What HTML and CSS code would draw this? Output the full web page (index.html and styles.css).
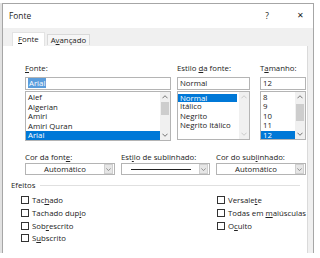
FILE: index.html
```html
<!DOCTYPE html>
<html lang="pt">
<head>
  <meta charset="UTF-8">
  <title>Fonte</title>
  <link rel="stylesheet" href="styles.css">
</head>
<body>
  <div class="window">
    <div class="titlebar">
      <span class="title">Fonte</span>
      <span class="ctrl">?</span>
      <span class="ctrl close">&#x2715;</span>
    </div>

    <div class="body">
      <div class="tabs">
        <div class="tab active"><u>F</u>onte</div>
        <div class="tab">A<u>v</u>ançado</div>
      </div>

      <div class="panel">
        <div class="pickers">
          <div class="col col-font">
            <div class="label"><u>F</u>onte:</div>
            <div class="input"><span class="sel">Arial</span></div>
            <div class="list">
              <div class="items">
                <div class="item">Alef</div>
                <div class="item">Algerian</div>
                <div class="item">Amiri</div>
                <div class="item">Amiri Quran</div>
                <div class="item on">Arial</div>
              </div>
              <div class="scroll">
                <svg class="arrow" viewBox="0 0 7 4"><path d="M0.5 3.5 L3.5 0.5 L6.5 3.5" /></svg>
                <div class="thumb thumb-font"></div>
                <svg class="arrow down" viewBox="0 0 7 4"><path d="M0.5 0.5 L3.5 3.5 L6.5 0.5" /></svg>
              </div>
            </div>
          </div>

          <div class="col col-style">
            <div class="label">Estilo <u>d</u>a fonte:</div>
            <div class="input">Normal</div>
            <div class="list short">
              <div class="items">
                <div class="item on part">Normal</div>
                <div class="item">Itálico</div>
                <div class="item">Negrito</div>
                <div class="item">Negrito Itálico</div>
              </div>
              <div class="scroll off">
                <svg class="arrow" viewBox="0 0 7 4"><path d="M0.5 3.5 L3.5 0.5 L6.5 3.5" /></svg>
                <svg class="arrow down" viewBox="0 0 7 4"><path d="M0.5 0.5 L3.5 3.5 L6.5 0.5" /></svg>
              </div>
            </div>
          </div>

          <div class="col col-size">
            <div class="label">T<u>a</u>manho:</div>
            <div class="input">12</div>
            <div class="list short">
              <div class="items">
                <div class="item">8</div>
                <div class="item">9</div>
                <div class="item">10</div>
                <div class="item">11</div>
                <div class="item on">12</div>
              </div>
              <div class="scroll">
                <svg class="arrow" viewBox="0 0 7 4"><path d="M0.5 3.5 L3.5 0.5 L6.5 3.5" /></svg>
                <div class="thumb thumb-size"></div>
                <svg class="arrow down" viewBox="0 0 7 4"><path d="M0.5 0.5 L3.5 3.5 L6.5 0.5" /></svg>
              </div>
            </div>
          </div>
        </div>

        <div class="combos">
          <div class="combo-col">
            <div class="label">Cor da font<u>e</u>:</div>
            <div class="combo">
              <span class="value">Automático</span>
              <span class="drop"><svg viewBox="0 0 7 4"><path d="M0.5 0.5 L3.5 3.5 L6.5 0.5" /></svg></span>
            </div>
          </div>
          <div class="combo-col">
            <div class="label">Est<u>i</u>lo de sublinhado:</div>
            <div class="combo">
              <span class="value"><span class="line"></span></span>
              <span class="drop"><svg viewBox="0 0 7 4"><path d="M0.5 0.5 L3.5 3.5 L6.5 0.5" /></svg></span>
            </div>
          </div>
          <div class="combo-col">
            <div class="label">Cor do sub<u>l</u>inhado:</div>
            <div class="combo">
              <span class="value">Automático</span>
              <span class="drop"><svg viewBox="0 0 7 4"><path d="M0.5 0.5 L3.5 3.5 L6.5 0.5" /></svg></span>
            </div>
          </div>
        </div>

        <div class="group">
          <div class="group-title"><span>Efeitos</span><span class="rule"></span></div>
          <div class="effects">
            <div class="checks">
              <label class="check"><span class="box"></span><span>Tac<u>h</u>ado</span></label>
              <label class="check"><span class="box"></span><span>Tachado dup<u>l</u>o</span></label>
              <label class="check"><span class="box"></span><span>Sob<u>r</u>escrito</span></label>
              <label class="check"><span class="box"></span><span>S<u>u</u>bscrito</span></label>
            </div>
            <div class="checks">
              <label class="check"><span class="box"></span><span>Versale<u>t</u>e</span></label>
              <label class="check"><span class="box"></span><span>Todas em <u>m</u>aiúsculas</span></label>
              <label class="check"><span class="box"></span><span>O<u>c</u>ulto</span></label>
            </div>
          </div>
        </div>
      </div>
    </div>
  </div>
</body>
</html>
```

FILE: styles.css
```css
body {
  margin: 0;
  background-color: #fff;
  font-family: 'Open Sans', 'Noto Sans', sans-serif;
  font-size: 7.8px;
  color: #222;
}

u {
  text-decoration-thickness: 1px;
  text-underline-offset: 1px;
}

.window {
  margin: 3px 0 0 2px;
  width: 312px;
  height: 250px;
  border: 1px solid #a6a6a6;
  border-bottom: none;
  box-sizing: border-box;
  display: flex;
  flex-direction: column;
  box-shadow: -2px 0 0 #e2e2e2;
}

.titlebar {
  height: 24px;
  display: flex;
  align-items: center;
  padding-left: 6px;
  padding-bottom: 2px;
  box-sizing: border-box;
  background-color: #fff;
}

.title {
  flex: 1;
  font-size: 8.4px;
}

.ctrl {
  width: 26px;
  text-align: center;
  font-size: 8.4px;
}

.close {
  margin-left: 7px;
  font-size: 7.6px;
}

.body {
  flex: 1;
  display: flex;
  flex-direction: column;
  background-color: #f0f0f0;
  padding-right: 5px;
}

.tabs {
  height: 18px;
  display: flex;
  align-items: flex-end;
  padding-left: 9px;
}

.tab {
  height: 10px;
  line-height: 10px;
  padding: 0 3px;
  margin-bottom: 1px;
  margin-left: 2px;
  border: 1px solid #d9d9d9;
  border-bottom: none;
  background-color: #f6f6f6;
}

.tab.active {
  height: 13px;
  line-height: 12px;
  padding: 0 5px;
  margin-bottom: 0;
  margin-left: 0;
  background-color: #fff;
  border-color: #e3e3e3;
}

.panel {
  flex: 1;
  min-width: 0;
  background-color: #fff;
  padding: 17px 0 0 8px;
  border-right: 1px solid #dadada;
}

.label {
  height: 10px;
  line-height: 10px;
  white-space: nowrap;
}

.pickers {
  display: flex;
  margin-left: 14px;
}

.col-font { width: 146px; }
.col-style { width: 73px; margin-left: 6px; }
.col-size { width: 46px; margin-left: 10px; }

.input {
  margin-top: 4px;
  height: 13px;
  line-height: 11px;
  border: 1px solid #b4b4b4;
  box-sizing: border-box;
  padding-left: 2px;
}

.sel {
  background-color: #5b9ddc;
  color: #fff;
  padding: 0 1px;
}

.list {
  margin-top: 1px;
  height: 50px;
  border: 1px solid #b4b4b4;
  box-sizing: border-box;
  display: flex;
}

.list.short {
  height: 49px;
}

.items {
  flex: 1;
  padding-top: 1px;
  overflow: hidden;
}

.list.short .items {
  padding-top: 0.5px;
}

.item {
  height: 9.5px;
  line-height: 9.5px;
  padding-left: 2px;
  white-space: nowrap;
}

.item.on {
  background-color: #0078d7;
  color: #fff;
}

.item.part {
  margin-right: 2px;
  height: 8px;
  line-height: 8px;
  margin-top: 1px;
  margin-bottom: 0.5px;
}

.scroll {
  width: 10px;
  background-color: #f0f0f0;
  display: flex;
  flex-direction: column;
  align-items: center;
  padding: 3px 0;
  box-sizing: border-box;
}

.arrow {
  width: 6px;
  height: 4px;
  fill: none;
  stroke: #606060;
  stroke-width: 1;
}

.arrow.down {
  margin-top: auto;
}

.scroll.off .arrow {
  stroke: #c4c4c4;
}

.thumb {
  width: 8px;
  background-color: #cdcdcd;
}

.thumb-font { height: 13px; margin-top: 3px; }
.thumb-size { height: 17px; margin-top: 5px; }

.combos {
  display: flex;
  gap: 6px;
  margin: 11px 0 0 14px;
}

.combo-col {
  width: 90px;
}

.combo-col:nth-child(2) {
  width: 89px;
}

.combo {
  margin-top: 1px;
  height: 12px;
  border: 1px solid #b4b4b4;
  box-sizing: border-box;
  display: flex;
  align-items: center;
}

.value {
  flex: 1;
  text-align: center;
  display: flex;
  justify-content: center;
  align-items: center;
}

.line {
  width: 60px;
  height: 1px;
  background-color: #222;
}

.drop {
  width: 9px;
  height: 10px;
  box-sizing: border-box;
  margin-right: 1px;
  border: 1px solid #cfcfcf;
  background-color: #e6e6e6;
  display: flex;
  align-items: center;
  justify-content: center;
}

.drop svg {
  width: 5px;
  height: 3px;
  fill: none;
  stroke: #707070;
  stroke-width: 1;
}

.group {
  margin-top: 5px;
}

.group-title {
  display: flex;
  align-items: center;
  height: 10px;
  line-height: 10px;
}

.rule {
  flex: 1;
  height: 1px;
  margin: 0 7px 0 4px;
  background-color: #e0e0e0;
}

.effects {
  display: flex;
  margin: 4px 0 0 10px;
}

.checks {
  flex: 0 0 196px;
}

.checks + .checks {
  flex: 1 1 auto;
  min-width: 0;
}

.check {
  display: flex;
  align-items: center;
  height: 12.7px;
  white-space: nowrap;
}

.box {
  width: 8px;
  height: 8px;
  border: 1px solid #333;
  box-sizing: border-box;
  margin-right: 3px;
  background-color: #fff;
}
```
